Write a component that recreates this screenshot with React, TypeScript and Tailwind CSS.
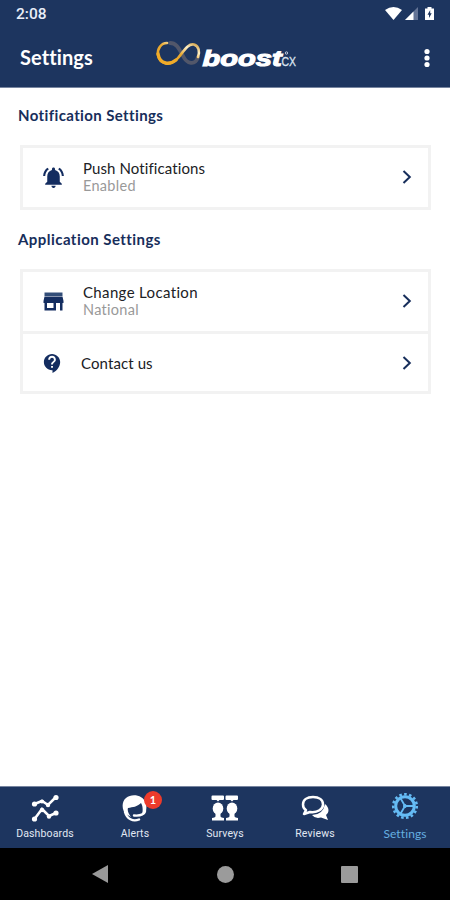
import type { ReactNode } from 'react';
import { MdNotificationsActive, MdContactSupport } from 'react-icons/md';

const navy = '#1d355f';

function StatusBar() {
  return (
    <div className="flex h-7 items-center justify-between pl-4 pr-[15px]">
      <span className="font-[Roboto] text-[15.5px] font-medium leading-7 text-[#e9eef8]">2:08</span>
      <svg width="50" height="16" viewBox="0 0 50 16" fill="#fff">
        <path d="M0 4Q8.500-1.800 17 4L8.500 14Z" />
        <path d="M20 14L33 1V14Z" fill="#647496" />
        <path d="M20 14L28.500 5.500V14Z" />
        <path d="M42.500 1h4v1.500h2.500v11.500h-9V2.500h2.500Z" />
        <path d="M45.200 4L42.500 8.700h1.500v3.300l2.700-4.700h-1.500Z" fill={navy} />
      </svg>
    </div>
  );
}

function Logo() {
  return (
    <svg width="143" height="32" viewBox="0 0 143 32">
      <defs>
        <linearGradient id="gold" x1="0" y1="1" x2="1" y2="0">
          <stop offset="0" stopColor="#efa623" />
          <stop offset=".5" stopColor="#e9a931" />
          <stop offset=".75" stopColor="#fff0c7" />
          <stop offset="1" stopColor="#c8912c" />
        </linearGradient>
      </defs>
      <g fill="none" strokeLinecap="round">
        <path d="M15 4C22 4 24 10 28 17C32 25 40 27 43 18" stroke="#52576a" strokeWidth="3.800" />
        <path d="M12 4C6 4 2 10 3 16C5 26 16 27 23 19C29 12 33 4 39 5.500C44 7 45 13 43 18" stroke="url(#gold)" strokeWidth="2.600" />
        <path d="M3 15C5 26 15 26 21 21" stroke="#f0ab29" strokeWidth="3.400" />
      </g>
      <text transform="translate(47.500 26.500) scale(1.130 1)" fill="#fff" stroke="#fff" strokeWidth="1.100" fontFamily="Liberation Sans, sans-serif" fontWeight="700" fontStyle="italic" fontSize="22" textLength="70" lengthAdjust="spacingAndGlyphs">boost</text>
      <text x="126.500" y="26.500" fill="#dce3ef" stroke="#dce3ef" strokeWidth=".3" fontFamily="Liberation Sans, sans-serif" fontSize="12" textLength="14.500" lengthAdjust="spacingAndGlyphs">CX</text>
      <circle cx="131.500" cy="14" r="1.200" fill="none" stroke="#dce3ef" strokeWidth=".8" />
    </svg>
  );
}

function StoreIcon() {
  return (
    <svg width="24" height="24" viewBox="0 0 24 24" fill="#142d60">
      <path d="M3.500 3.500H21.500V7H3.500Z" fill="#324d78" />
      <path fillRule="evenodd" d="M3.500 7.500H21.500L22.500 12V14H21.500V21.500H19V14H15V21.500H3.500V14H2.500V12ZM6 14V19H12.500V14Z" />
    </svg>
  );
}

function Chevron() {
  return (
    <svg width="10" height="14" viewBox="0 0 10 14" fill="none" stroke="#172e5b" strokeWidth="2">
      <path d="M1.500 1L7.800 7L1.500 13" />
    </svg>
  );
}

function Row({ icon, title, detail }: { icon: ReactNode; title: string; detail?: string }) {
  return (
    <div className={detail ? 'flex flex-1 items-center pb-px pr-[16px]' : 'flex flex-1 items-center pr-[16px] pt-px'}>
      <div className={detail ? 'flex w-[60px] justify-center' : 'flex w-[58px] justify-center'}>{icon}</div>
      <div className={detail ? 'flex-1 text-[15px] leading-[18px]' : 'flex-1 text-[15px] leading-[18px] tracking-[.25px]'}>
        <p className={title === 'Change Location' ? 'tracking-[.35px] text-[#202124]' : 'tracking-[.1px] text-[#202124]'}>{title}</p>
        {detail && <p className="text-[14.5px] tracking-[.3px] text-[#999]">{detail}</p>}
      </div>
      <Chevron />
    </div>
  );
}

function DashboardIcon() {
  return (
    <svg width="28" height="28" viewBox="0 0 28 28" fill="#fff" stroke="#fff" strokeWidth="2.500">
      <path d="M3.500 10L11 7L17 11L25 3M3.500 25L11 15L18 22L25 19" fill="none" />
      <g stroke="none">
        <circle cx="3.500" cy="10" r="2.600" /><circle cx="11" cy="7.500" r="2.100" /><circle cx="17" cy="11" r="2.200" /><circle cx="25" cy="3.500" r="2.600" />
        <circle cx="3.500" cy="25" r="2.600" /><circle cx="11" cy="16" r="2.200" /><circle cx="18" cy="22.500" r="2.200" /><circle cx="25" cy="19" r="2.600" />
      </g>
    </svg>
  );
}

function AlertIcon() {
  return (
    <svg width="28" height="28" viewBox="0 0 28 28" fill="none">
      <path d="M5 20C1 17 0 8 5 4C11-1 22 1 25 9C26 13 25 18 24 20L21 21C22 17 22 12 20 9C16 13 12 13 7 14C6 17 8 20 10 23Z" fill="#fff" />
      <path d="M4 18C6 25 12 28 18 25.500M13 21.500Q22 22.500 24 17" stroke="#fff" strokeWidth="2.400" strokeLinecap="round" />
    </svg>
  );
}

function SurveyPerson() {
  return (
    <>
      <path d="M1.500 1.500H12Q13 1.500 13 2.500V5Q13 6 12 6H8.500L7 7.500L5.500 6H1.500Q.5 6 .5 5V2.500Q.5 1.500 1.500 1.500Z" />
      <ellipse cx="7" cy="14.500" rx="5.300" ry="6" />
      <path d="M4.500 19H9.500V22.500Q10 23.500 13 24V26.500H1V24Q4 23.500 4.500 22.500Z" />
    </>
  );
}

function SurveyIcon() {
  return (
    <svg width="28" height="28" viewBox="0 0 28 28" fill="#fff">
      <SurveyPerson />
      <g transform="translate(14 0)"><SurveyPerson /></g>
    </svg>
  );
}

function ReviewIcon() {
  return (
    <svg width="30" height="28" viewBox="0 0 30 28" fill="none">
      <path d="M25 10C30 14 29 19 26 21L28 26L21 23.500Q15 25 12 21Q23 21 25 10Z" fill="#fff" />
      <path d="M13 3C7 3 3 6 3 10.500C3 13 4 15 6 16L4 20L10 18C18 19 23 15 23 10.500C23 6 19 3 13 3Z" fill={navy} stroke="#fff" strokeWidth="2.500" strokeLinejoin="round" />
    </svg>
  );
}

function GearIcon() {
  return (
    <svg width="28" height="28" viewBox="0 0 28 28" fill="none" stroke="#65bbf4">
      <circle cx="14" cy="14" r="11.800" strokeWidth="2.500" strokeDasharray="2.600 2.343" />
      <circle cx="14" cy="14" r="9.300" strokeWidth="3" />
      <path d="M14 14L9.500 6.300M14 14L9.500 21.700M14 14H22" strokeWidth="1.800" />
      <circle cx="14" cy="14" r="1.500" fill="#65bbf4" />
    </svg>
  );
}

function Tab({ icon, label, active, badge }: { icon: ReactNode; label: string; active?: boolean; badge?: string }) {
  return (
    <div className="flex w-[90px] flex-col items-center">
      <div className={active ? 'relative mt-[5px] h-[34px]' : 'relative mt-[7px] h-[32px]'}>
        {icon}
        {badge && <span className="absolute -top-[3px] left-[23px] flex size-[18px] items-center justify-center rounded-full bg-[#ed3b2b] text-[11px] font-bold text-white">{badge}</span>}
      </div>
      <span className={active ? 'text-[12px] leading-[16px] tracking-[.1px] text-[#65afe1]' : 'font-[Roboto] text-[10.5px] leading-[16px] tracking-[.15px] text-[#e1e8f3]'}>{label}</span>
    </div>
  );
}

export default function App() {
  return (
    <div className="flex h-[900px] w-[450px] flex-col overflow-hidden bg-white font-[Lato,sans-serif] [font-variant-ligatures:none]">
      <header className="h-[88px] shrink-0 border-b border-[#7785a0] bg-[#1d355f]">
        <StatusBar />
        <div className="flex h-[59px] items-center pl-5">
          <h1 className="-mt-px w-[134px] text-[20px] font-bold leading-6 tracking-[.1px] text-white">Settings</h1>
          <div className="-mt-[5px] ml-px mr-[-1px]"><Logo /></div>
          <svg className="ml-auto mr-[19px]" width="8" height="20" viewBox="0 0 8 20" fill="#fff"><circle cx="4" cy="3.500" r="2.600" /><circle cx="4" cy="10" r="2.600" /><circle cx="4" cy="16.500" r="2.600" /></svg>
        </div>
      </header>
      <main className="flex-1">
        <h2 className="ml-[18px] mt-[17px] text-[15px] font-bold leading-5 tracking-[.38px] text-[#172e5b]">Notification Settings</h2>
        <section className="ml-5 mt-5 flex h-[65px] w-[411px] border-[3px] border-[#f2f2f2]">
          <Row icon={<MdNotificationsActive size={25} color="#142d60" />} title="Push Notifications" detail="Enabled" />
        </section>
        <h2 className="ml-[18px] mt-[19px] text-[15px] font-bold leading-5 tracking-[.45px] text-[#172e5b]">Application Settings</h2>
        <section className="ml-5 mt-[20px] flex h-[125px] w-[411px] flex-col border-[3px] border-[#f2f2f2]">
          <div className="flex h-[62px] border-b-[3px] border-[#f2f2f2]">
            <Row icon={<StoreIcon />} title="Change Location" detail="National" />
          </div>
          <Row icon={<MdContactSupport size={23} color="#142d60" />} title="Contact us" />
        </section>
      </main>
      <nav className="flex h-[62px] shrink-0 border-t border-[#7785a0] bg-[#1d355f]">
        <Tab icon={<DashboardIcon />} label="Dashboards" />
        <Tab icon={<AlertIcon />} label="Alerts" badge="1" />
        <Tab icon={<SurveyIcon />} label="Surveys" />
        <Tab icon={<ReviewIcon />} label="Reviews" />
        <Tab icon={<GearIcon />} label="Settings" active />
      </nav>
      <footer className="flex h-[52px] shrink-0 items-center bg-black pl-[91px]">
        <svg width="17" height="20" viewBox="0 0 17 20" fill="#999"><path d="M1 10L17 1V19Z" /></svg>
        <div className="ml-[109px] size-[17px] rounded-full bg-[#9b9b9b]" />
        <div className="ml-[107px] size-[17px] rounded-[1px] bg-[#9b9b9b]" />
      </footer>
    </div>
  );
}
